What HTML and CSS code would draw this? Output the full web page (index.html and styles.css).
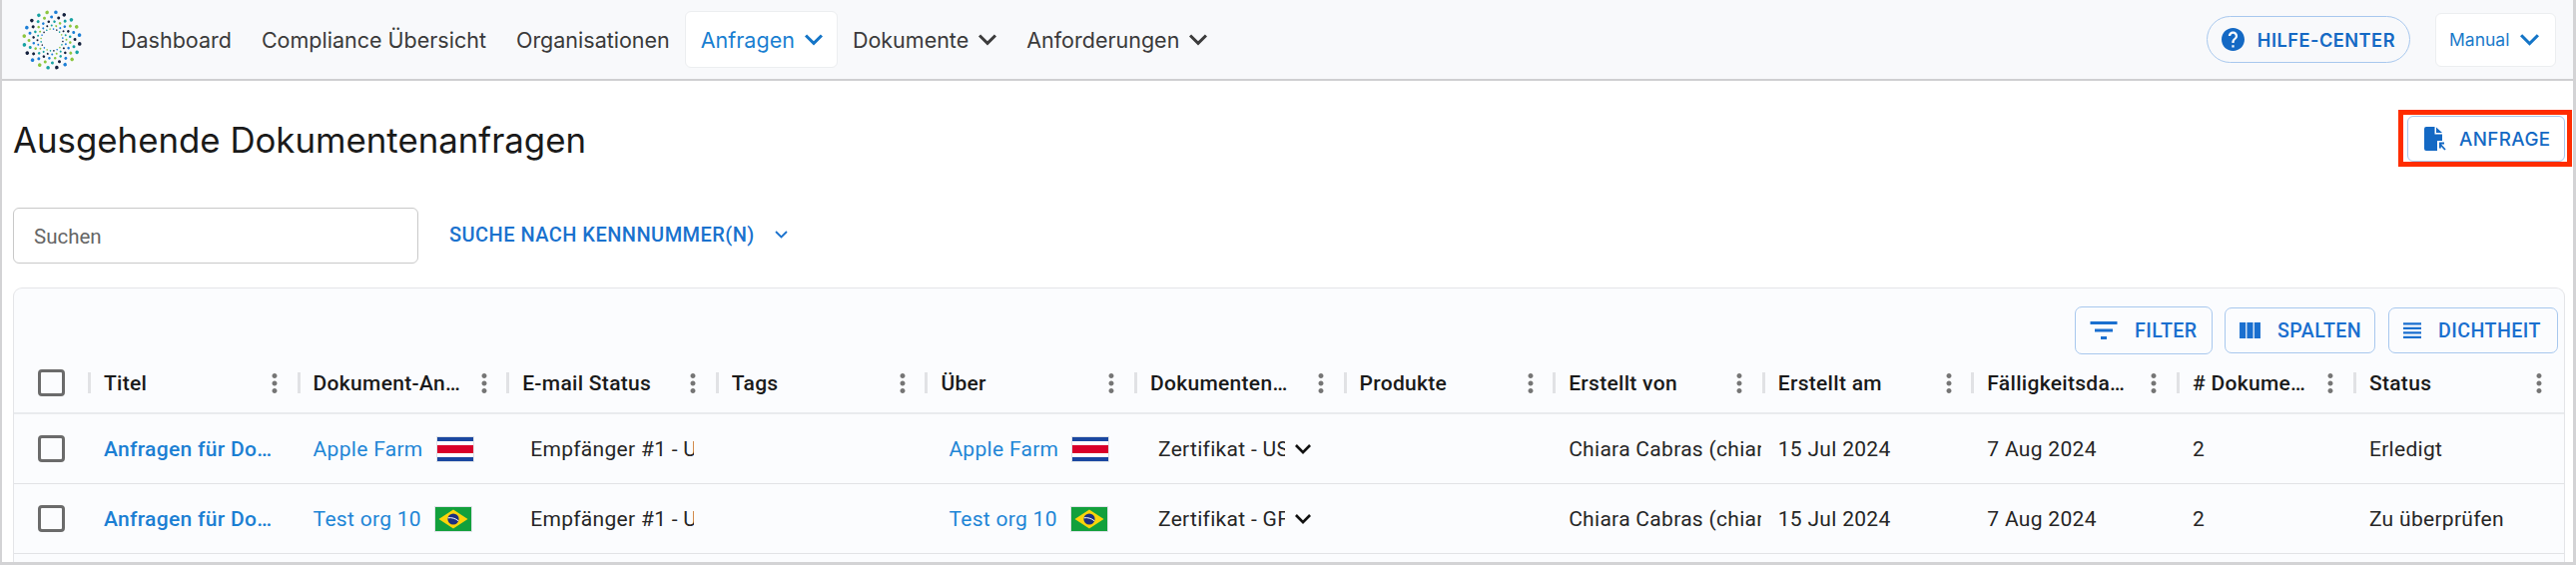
FILE: index.html
```html
<!DOCTYPE html>
<html lang="de">
<head>
<meta charset="utf-8">
<title>Ausgehende Dokumentenanfragen</title>
<link rel="stylesheet" href="styles.css">
</head>
<body>
<svg class="defs" width="0" height="0" aria-hidden="true">
  <defs>
    <g id="sp0"><circle cy="-28" r="1.8" fill="#8cc63f"/><circle cy="-23" r="1.5" fill="#1c7ed6" transform="rotate(9)"/><circle cy="-18.5" r="1.3" fill="#14213d" transform="rotate(0)"/><circle cy="-14.5" r="1" fill="#17a2a2" transform="rotate(9)"/><circle cy="-11" r=".8" fill="#8cc63f"/></g>
    <g id="sp1"><circle cy="-28" r="1.8" fill="#1c7ed6"/><circle cy="-23" r="1.5" fill="#14213d" transform="rotate(9)"/><circle cy="-18.5" r="1.3" fill="#17a2a2" transform="rotate(0)"/><circle cy="-14.5" r="1" fill="#8cc63f" transform="rotate(9)"/><circle cy="-11" r=".8" fill="#1c7ed6"/></g>
    <g id="sp2"><circle cy="-28" r="1.8" fill="#14213d"/><circle cy="-23" r="1.5" fill="#17a2a2" transform="rotate(9)"/><circle cy="-18.5" r="1.3" fill="#8cc63f" transform="rotate(0)"/><circle cy="-14.5" r="1" fill="#1c7ed6" transform="rotate(9)"/><circle cy="-11" r=".8" fill="#14213d"/></g>
    <g id="sp3"><circle cy="-28" r="1.8" fill="#17a2a2"/><circle cy="-23" r="1.5" fill="#8cc63f" transform="rotate(9)"/><circle cy="-18.5" r="1.3" fill="#1c7ed6" transform="rotate(0)"/><circle cy="-14.5" r="1" fill="#14213d" transform="rotate(9)"/><circle cy="-11" r=".8" fill="#17a2a2"/></g>
    <symbol id="chev" viewBox="6 8.59 12 7.41"><path fill="currentColor" d="M16.59 8.59 12 13.17 7.41 8.59 6 10l6 6 6-6z"/></symbol>
    <symbol id="dots" viewBox="0 0 24 24"><path fill="currentColor" d="M12 8c1.1 0 2-.9 2-2s-.9-2-2-2-2 .9-2 2 .9 2 2 2zm0 2c-1.1 0-2 .9-2 2s.9 2 2 2 2-.9 2-2-.9-2-2-2zm0 6c-1.1 0-2 .9-2 2s.9 2 2 2 2-.9 2-2-.9-2-2-2z"/></symbol>
    <symbol id="cr" viewBox="0 0 38 26">
      <rect width="38" height="26" fill="#dfe3e8"/><rect x="1" y="1" width="36" height="24" fill="#fff"/>
      <rect x="1" y="1" width="36" height="4" fill="#1a47a0"/><rect x="1" y="9" width="36" height="8" fill="#d9002a"/><rect x="1" y="21" width="36" height="4" fill="#1a47a0"/>
    </symbol>
    <symbol id="br" viewBox="0 0 38 26">
      <rect width="38" height="26" fill="#dfe3e8"/><rect x="1" y="1" width="36" height="24" fill="#12a03c"/>
      <path fill="#fbd40a" d="M19 3.5 33.5 13 19 22.5 4.500 13z"/><circle cx="19" cy="13" r="5.600" fill="#1d2f80"/>
      <path fill="none" stroke="#fff" stroke-width="1" d="M13.700 11.800c3.700-.6 7.400.5 10.500 3"/>
    </symbol>
  </defs>
</svg>

<header class="nav">
  <svg class="logo" viewBox="-30 -30 60 60" aria-label="Logo">
    <use href="#sp0" transform="rotate(-10)"/><use href="#sp1" transform="rotate(8)"/><use href="#sp2" transform="rotate(26)"/><use href="#sp3" transform="rotate(44)"/>
    <use href="#sp0" transform="rotate(62)"/><use href="#sp1" transform="rotate(80)"/><use href="#sp2" transform="rotate(98)"/><use href="#sp3" transform="rotate(116)"/>
    <use href="#sp0" transform="rotate(134)"/><use href="#sp1" transform="rotate(152)"/><use href="#sp2" transform="rotate(170)"/><use href="#sp3" transform="rotate(188)"/>
    <use href="#sp0" transform="rotate(206)"/><use href="#sp1" transform="rotate(224)"/><use href="#sp2" transform="rotate(242)"/><use href="#sp3" transform="rotate(260)"/>
    <use href="#sp0" transform="rotate(278)"/><use href="#sp1" transform="rotate(296)"/><use href="#sp2" transform="rotate(314)"/><use href="#sp3" transform="rotate(332)"/>
  </svg>
  <nav class="menu">
    <a class="item">Dashboard</a>
    <a class="item">Compliance Übersicht</a>
    <a class="item">Organisationen</a>
    <a class="item active">Anfragen <svg class="chev"><use href="#chev"/></svg></a>
    <a class="item">Dokumente <svg class="chev"><use href="#chev"/></svg></a>
    <a class="item">Anforderungen <svg class="chev"><use href="#chev"/></svg></a>
  </nav>
  <a class="help">
    <svg class="help-icon" viewBox="2 2 20 20"><path fill="currentColor" d="M12 2C6.480 2 2 6.480 2 12s4.480 10 10 10 10-4.480 10-10S17.520 2 12 2zm1 17h-2v-2h2v2zm2.070-7.750l-.9.920C13.450 12.900 13 13.500 13 15h-2v-.5c0-1.100.45-2.100 1.170-2.830l1.240-1.260c.37-.36.59-.86.59-1.410 0-1.100-.9-2-2-2s-2 .9-2 2H8c0-2.210 1.790-4 4-4s4 1.790 4 4c0 .88-.36 1.680-.93 2.250z"/></svg>
    HILFE-CENTER
  </a>
  <a class="manual">Manual <svg class="chev"><use href="#chev"/></svg></a>
</header>

<main class="main">
  <div class="title-row">
    <h1 class="title">Ausgehende Dokumentenanfragen</h1>
    <div class="highlight">
      <button class="btn-request">
        <svg class="doc-icon" viewBox="0 0 22 24">
          <path fill="currentColor" d="M2 0h8.500v7.500H18v6.500h-5v10H2a2 2 0 0 1-2-2V2a2 2 0 0 1 2-2z"/>
          <path fill="currentColor" d="M12 0.500l6 5.500h-6z"/>
          <path fill="none" stroke="currentColor" stroke-width="1.800" d="M15 16.500h5M15.900 16.500v5M15.500 17l5.500 6"/>
        </svg>
        ANFRAGE
      </button>
    </div>
  </div>

  <div class="search-row">
    <div class="search">Suchen</div>
    <a class="id-search">SUCHE NACH KENNNUMMER(N)
      <svg class="id-chev" viewBox="0 0 13 8"><path fill="none" stroke="currentColor" stroke-width="1.800" d="M1 1l5.500 5.500L12 1"/></svg>
    </a>
  </div>

  <section class="card">
    <div class="toolbar">
      <button class="tool tool-filter"><svg class="ic-filter" viewBox="3 6 18 12"><path fill="currentColor" d="M10 18h4v-2h-4v2zM3 6v2h18V6H3zm3 7h12v-2H6v2z"/></svg>FILTER</button>
      <button class="tool tool-cols"><svg class="ic-cols" viewBox="4 5 17 13"><path fill="currentColor" d="M10 18h5V5h-5v13zm-6 0h5V5H4v13zM16 5v13h5V5h-5z"/></svg>SPALTEN</button>
      <button class="tool tool-dens"><svg class="ic-dens" viewBox="4 5 16 14"><path fill="currentColor" d="M4 15h16v-2H4v2zm0 4h16v-2H4v2zm0-8h16V9H4v2zm0-6v2h16V5H4z"/></svg>DICHTHEIT</button>
    </div>

    <div class="grid head">
      <div class="check-cell"><span class="checkbox"></span></div>
      <div class="hcell"><i class="sep"></i><span class="hlabel">Titel</span><svg class="dots"><use href="#dots"/></svg></div>
      <div class="hcell"><i class="sep"></i><span class="hlabel">Dokument-An…</span><svg class="dots"><use href="#dots"/></svg></div>
      <div class="hcell"><i class="sep"></i><span class="hlabel">E-mail Status</span><svg class="dots"><use href="#dots"/></svg></div>
      <div class="hcell"><i class="sep"></i><span class="hlabel">Tags</span><svg class="dots"><use href="#dots"/></svg></div>
      <div class="hcell"><i class="sep"></i><span class="hlabel">Über</span><svg class="dots"><use href="#dots"/></svg></div>
      <div class="hcell"><i class="sep"></i><span class="hlabel">Dokumenten…</span><svg class="dots"><use href="#dots"/></svg></div>
      <div class="hcell"><i class="sep"></i><span class="hlabel">Produkte</span><svg class="dots"><use href="#dots"/></svg></div>
      <div class="hcell"><i class="sep"></i><span class="hlabel">Erstellt von</span><svg class="dots"><use href="#dots"/></svg></div>
      <div class="hcell"><i class="sep"></i><span class="hlabel">Erstellt am</span><svg class="dots"><use href="#dots"/></svg></div>
      <div class="hcell"><i class="sep"></i><span class="hlabel">Fälligkeitsda…</span><svg class="dots"><use href="#dots"/></svg></div>
      <div class="hcell"><i class="sep"></i><span class="hlabel"># Dokume…</span><svg class="dots"><use href="#dots"/></svg></div>
      <div class="hcell"><i class="sep"></i><span class="hlabel">Status</span><svg class="dots"><use href="#dots"/></svg></div>
    </div>

    <div class="grid row">
      <div class="check-cell"><span class="checkbox"></span></div>
      <div class="cell"><a class="title-link">Anfragen für Do…</a></div>
      <div class="cell"><a class="org">Apple Farm</a><svg class="flag"><use href="#cr"/></svg></div>
      <div class="cell indent"><span class="clip">Empfänger #1 - U</span></div>
      <div class="cell"></div>
      <div class="cell indent"><a class="org">Apple Farm</a><svg class="flag"><use href="#cr"/></svg></div>
      <div class="cell indent"><span class="clip clip-doc">Zertifikat - US</span><svg class="doc-chev"><use href="#chev"/></svg></div>
      <div class="cell"></div>
      <div class="cell name"><span class="clip-name">Chiara Cabras (chiar</span></div>
      <div class="cell">15 Jul 2024</div>
      <div class="cell">7 Aug 2024</div>
      <div class="cell">2</div>
      <div class="cell">Erledigt</div>
    </div>

    <div class="grid row">
      <div class="check-cell"><span class="checkbox"></span></div>
      <div class="cell"><a class="title-link">Anfragen für Do…</a></div>
      <div class="cell"><a class="org">Test org 10</a><svg class="flag"><use href="#br"/></svg></div>
      <div class="cell indent"><span class="clip">Empfänger #1 - U</span></div>
      <div class="cell"></div>
      <div class="cell indent"><a class="org">Test org 10</a><svg class="flag"><use href="#br"/></svg></div>
      <div class="cell indent"><span class="clip clip-doc">Zertifikat - GF</span><svg class="doc-chev"><use href="#chev"/></svg></div>
      <div class="cell"></div>
      <div class="cell name"><span class="clip-name">Chiara Cabras (chiar</span></div>
      <div class="cell">15 Jul 2024</div>
      <div class="cell">7 Aug 2024</div>
      <div class="cell">2</div>
      <div class="cell">Zu überprüfen</div>
    </div>
  </section>
</main>
</body>
</html>
```
FILE: styles.css
```css
* { box-sizing: border-box; }
html, body { margin: 0; padding: 0; }
body {
  width: 2580px;
  height: 566px;
  overflow: hidden;
  background: #fff;
  border-left: 2px solid #d3d3d5;
  border-right: 3px solid #d3d3d5;
  border-bottom: 3px solid #d3d3d5;
  font-family: "Roboto", "Liberation Sans", sans-serif;
  color: #1f1f1f;
}
.defs { position: absolute; }

/* top navigation */
.nav {
  display: flex;
  align-items: center;
  height: 81px;
  padding: 0 17px 0 20px;
  background: #f8f9fb;
  border-bottom: 2px solid #cfcfd1;
  font-family: "Inter", "Liberation Sans", sans-serif;
}
.logo { width: 60px; height: 60px; flex: none; }
.menu { display: flex; align-items: center; margin-left: 24px; }
.item {
  display: flex;
  align-items: center;
  gap: 10px;
  height: 57px;
  padding: 0 15px;
  font-size: 21.5px;
  color: #3a3a3a;
  white-space: nowrap;
}
.item.active {
  color: #1a7fd1;
  background: #fff;
  border: 1px solid #eceef0;
  border-radius: 6px;
  padding: 0 14px 0 15px;
}
.chev { width: 18px; height: 12px; flex: none; }
.item .chev { color: #3c3c3c; }
.item.active .chev { color: #1475c7; }
.help {
  display: flex;
  align-items: center;
  gap: 13px;
  margin-left: auto;
  height: 47px;
  padding: 0 14px;
  border: 1px solid #a8c8ee;
  border-radius: 24px;
  font-size: 18.2px;
  font-weight: 600;
  letter-spacing: .5px;
  color: #1469c4;
  white-space: nowrap;
}
.help-icon { width: 23px; height: 23px; }
.manual {
  display: flex;
  align-items: center;
  gap: 11px;
  width: 121px;
  height: 54px;
  margin-left: 25px;
  padding: 0 0 0 13px;
  background: #fff;
  border: 1px solid #eceef0;
  border-radius: 6px;
  font-size: 17.5px;
  color: #1a7ac9;
  white-space: nowrap;
}
.manual .chev { width: 19px; color: #1475c7; }

/* page */
.main { padding: 0 8px 0 11px; }
.title-row {
  display: flex;
  align-items: center;
  justify-content: space-between;
  margin-right: -7px;
  padding-top: 29px;
}
.title {
  margin: 2px 0 0;
  font-family: "Inter", "Liberation Sans", sans-serif;
  font-size: 34.8px;
  font-weight: 400;
  color: #1a1a1a;
}
.highlight {
  width: 174px;
  height: 57px;
  padding: 1px 2px 0 4px;
  border: 5px solid #ff2d00;
}
.btn-request {
  display: flex;
  align-items: center;
  gap: 13px;
  width: 158px;
  height: 46px;
  padding: 0 0 0 16px;
  background: #fff;
  border: 1px solid #a8c8ee;
  border-radius: 6px;
  font-family: "Inter", "Liberation Sans", sans-serif;
  font-size: 18.8px;
  font-weight: 500;
  letter-spacing: .4px;
  color: #1469c4;
}
.doc-icon { width: 22px; height: 24px; flex: none; }

.search-row { display: flex; align-items: center; margin-top: 41px; }
.search {
  width: 406px;
  height: 56px;
  padding: 0 20px;
  background: #fff;
  border: 1px solid #c9c9c9;
  border-radius: 6px;
  font-size: 20.5px;
  line-height: 56px;
  color: #666;
}
.id-search {
  display: flex;
  align-items: center;
  gap: 20px;
  margin: -2px 0 0 31px;
  font-size: 20px;
  font-weight: 500;
  letter-spacing: .45px;
  color: #1a72ce;
  white-space: nowrap;
}
.id-chev { width: 13px; height: 8px; }

/* table card */
.card {
  margin-top: 24px;
  height: 280px;
  background: #fbfcfe;
  border: 1px solid #e4e5e8;
  border-bottom: 0;
  border-radius: 9px 9px 0 0;
}
.toolbar {
  display: flex;
  align-items: center;
  justify-content: flex-end;
  gap: 12px;
  height: 65px;
  padding: 19px 6px 0 0;
}
.tool {
  display: flex;
  align-items: center;
  height: 46px;
  padding: 0 0 0 14px;
  background: transparent;
  border: 1px solid #a8c8ee;
  border-radius: 7px;
  font-family: "Roboto", "Liberation Sans", sans-serif;
  font-size: 19.6px;
  font-weight: 500;
  letter-spacing: .45px;
  color: #1a6fcf;
}
.tool-filter { width: 138px; height: 48px; }
.tool-cols { width: 151px; }
.tool-dens { width: 170px; margin-left: 1px; }
.ic-filter { width: 28px; height: 18px; margin-right: 17px; }
.ic-cols { width: 21px; height: 16px; margin-right: 17px; }
.ic-dens { width: 18px; height: 16px; margin-right: 17px; }

.grid {
  display: grid;
  grid-template-columns: 74px repeat(9, 209.6px) 205.6px 177px 209px;
  align-items: center;
  font-size: 21px;
  letter-spacing: .3px;
}
.head { height: 61px; border-bottom: 2px solid #e9ebee; font-weight: 500; color: #1a1a1a; }
.row { height: 70px; border-bottom: 1px solid #e2e3e6; color: #262626; }
.check-cell { padding-left: 24px; display: flex; }
.checkbox {
  width: 27px;
  height: 27px;
  border: 3px solid #6b6b6b;
  border-radius: 4px;
}
.hcell {
  display: flex;
  align-items: center;
  padding-right: 7.500px;
  min-width: 0;
}
.sep { flex: none; width: 3px; height: 21px; margin-right: 13px; background: #e1e2e5; }
.hlabel { flex: 1; white-space: nowrap; overflow: hidden; }
.dots { width: 30px; height: 30px; flex: none; color: #757575; }

.cell {
  display: flex;
  align-items: center;
  padding-left: 16px;
  min-width: 0;
  white-space: nowrap;
}
.cell.indent { padding-left: 24px; }
.title-link { font-weight: 500; color: #1b7fd3; }
.org { color: #1f86d6; }
.flag { width: 38px; height: 26px; margin-left: 13px; flex: none; }
.clip { display: block; width: 164px; overflow: hidden; }
.clip-doc { width: 127px; }
.clip-name { display: block; width: 193px; overflow: hidden; }
.doc-chev { width: 16px; height: 10px; margin-left: 10px; color: #111; flex: none; }
```
